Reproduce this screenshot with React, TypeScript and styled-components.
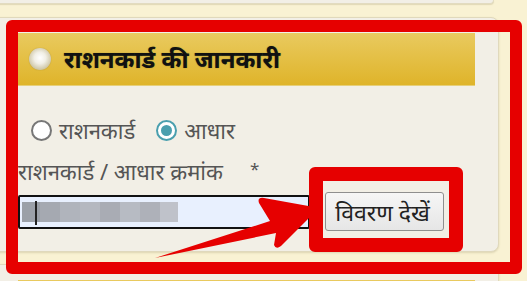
import React from "react";
import styled, { createGlobalStyle } from "styled-components";

const Global = createGlobalStyle`
  html, body { margin: 0; padding: 0; }
  body {
    width: 527px;
    height: 281px;
    overflow: hidden;
    background: #f9f2d3;
    font-family: "Noto Sans", "Noto Sans Devanagari", sans-serif;
  }
`;

const Page = styled.div`
  position: relative;
  width: 527px;
  height: 281px;
  overflow: hidden;
`;

const TopPanel = styled.div`
  margin-left: -10px;
  width: 502px;
  height: 3px;
  background: #f2efe6;
  border: 1px solid #e2dbc0;
  border-top: none;
  border-radius: 0 0 8px 8px;
  box-shadow: 0 1px 1px rgba(180, 170, 130, 0.35);
`;

const Section = styled.section<{ $top: number }>`
  margin-top: ${(p) => p.$top}px;
  margin-left: -10px;
  width: 509px;
  box-sizing: border-box;
  padding: 15px 0 20px 27px;
  background: #f2efe6;
  border: 1px solid #e0d9bc;
  border-radius: 8px;
  box-shadow: 0 1px 2px rgba(180, 170, 130, 0.4);
`;

const Header = styled.div`
  width: 457px;
  height: 53px;
  box-sizing: border-box;
  display: flex;
  align-items: center;
  gap: 13px;
  padding-left: 11px;
  background: linear-gradient(#e9ca5f, #dfb42a);
  border-bottom: 1px solid #e6cf7a;
`;

const Bullet = styled.span`
  width: 22px;
  height: 22px;
  border-radius: 50%;
  background: radial-gradient(circle at 50% 45%, #ffffff 0%, #f1efe6 35%, #cfc7a8 70%, #a69a6c 100%);
  box-shadow: 0 0 1px rgba(120, 100, 40, 0.6);
`;

const HeaderTitle = styled.h2`
  margin: 0;
  font-size: 24px;
  line-height: 30px;
  font-weight: 700;
  color: #111;
  text-shadow: 0 0 1px rgba(20, 60, 20, 0.5);
`;

const RadioRow = styled.div`
  margin-top: 29px;
  height: 30px;
  display: flex;
  align-items: center;
  padding-left: 13px;
  gap: 7px;
`;

const Radio = styled.span<{ $checked?: boolean }>`
  width: 21px;
  height: 21px;
  box-sizing: border-box;
  border-radius: 50%;
  border: 2px solid ${(p) => (p.$checked ? "#4a9fae" : "#777")};
  background: #fff;
  display: flex;
  align-items: center;
  justify-content: center;
  &::after {
    content: "";
    width: 11px;
    height: 11px;
    border-radius: 50%;
    background: ${(p) => (p.$checked ? "#4a9fae" : "transparent")};
  }
`;

const RadioLabel = styled.span<{ $gapAfter?: number }>`
  font-size: 22px;
  line-height: 30px;
  color: #555;
  margin-right: ${(p) => p.$gapAfter ?? 0}px;
`;

const FieldLabel = styled.div`
  margin-top: 13px;
  height: 26px;
  display: flex;
  align-items: center;
  gap: 27px;
  font-size: 22px;
  line-height: 26px;
  color: #555;
`;

const Star = styled.span`
  font-size: 17px;
  margin-top: -4px;
`;

const InputRow = styled.div`
  margin-top: 8px;
  display: flex;
  align-items: center;
  gap: 15px;
`;

const Input = styled.div`
  width: 292px;
  height: 34px;
  box-sizing: border-box;
  border: 2px solid #111;
  border-radius: 2px;
  background: #e8f0fe;
  display: flex;
  align-items: center;
  padding-left: 2px;
  position: relative;
`;

const Blur = styled.span<{ $c: string; $w: number }>`
  display: block;
  width: ${(p) => p.$w}px;
  height: 20px;
  background: ${(p) => p.$c};
`;

const Caret = styled.span`
  position: absolute;
  left: 15px;
  top: 4px;
  width: 2px;
  height: 24px;
  background: #222;
`;

const Button = styled.button`
  width: 119px;
  height: 39px;
  box-sizing: border-box;
  border: 1px solid #8f8f8f;
  border-radius: 3px;
  background: linear-gradient(#f6f6f6, #e6e6e6);
  font-family: inherit;
  font-size: 23px;
  line-height: 30px;
  color: #222;
  padding: 0 4px 0 0;
`;

const Overlay = styled.svg`
  position: absolute;
  left: 0;
  top: 0;
  pointer-events: none;
`;

const Frame = styled.div<{ $x: number; $y: number; $w: number; $h: number; $b: number }>`
  position: absolute;
  left: ${(p) => p.$x}px;
  top: ${(p) => p.$y}px;
  width: ${(p) => p.$w}px;
  height: ${(p) => p.$h}px;
  box-sizing: border-box;
  border: ${(p) => p.$b}px solid #e60000;
  border-radius: 6px;
  pointer-events: none;
`;

const blurs: [string, number][] = [
  ["#9ba0a8", 18],
  ["#a5a9b1", 20],
  ["#b0b4bc", 20],
  ["#b5b8c0", 20],
  ["#a9acb4", 20],
  ["#b7bbc3", 20],
  ["#aeb1b9", 20],
  ["#bfc2ca", 18],
];

export default function App() {
  return (
    <Page>
      <Global />
      <TopPanel />
      <Section $top={13}>
        <Header>
          <Bullet />
          <HeaderTitle>राशनकार्ड की जानकारी</HeaderTitle>
        </Header>
        <RadioRow>
          <Radio />
          <RadioLabel $gapAfter={14}>राशनकार्ड</RadioLabel>
          <Radio $checked />
          <RadioLabel>आधार</RadioLabel>
        </RadioRow>
        <FieldLabel>
          <span>राशनकार्ड / आधार क्रमांक</span>
          <Star>*</Star>
        </FieldLabel>
        <InputRow>
          <Input>
            {blurs.map(([c, w], i) => (
              <Blur key={i} $c={c} $w={w} />
            ))}
            <Caret />
          </Input>
          <Button>विवरण देखें</Button>
        </InputRow>
      </Section>
      <Section $top={12}>
        <Header />
      </Section>
      <Frame $x={6} $y={20} $w={516} $h={254} $b={12} />
      <Frame $x={309} $y={167} $w={154} $h={85} $b={14} />
      <Overlay width="527" height="281" viewBox="0 0 527 281">
        <path
          d="M155 258 L270 221 L259 203 Q257 197 264 198 L314 207 Q318 209 315 212 L281 246 Q276 250 274 245 L276 233 Z"
          fill="#e60000"
        />
      </Overlay>
    </Page>
  );
}
